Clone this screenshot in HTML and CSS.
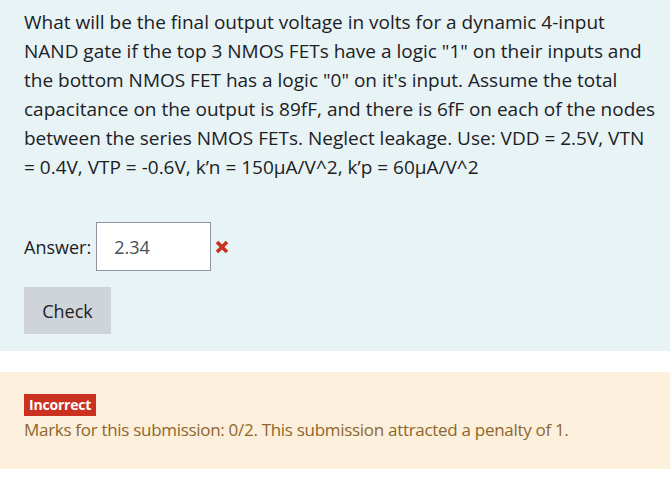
FILE: index.html
```html
<!DOCTYPE html>
<html>
<head>
<meta charset="utf-8">
<link rel="stylesheet" href="styles.css">
</head>
<body>
<div class="formulation">
  <p class="qtext">What will be the final output voltage in volts for a dynamic 4-input NAND gate if the top 3 NMOS FETs have a logic "1" on their inputs and the bottom NMOS FET has a logic "0" on it's input. Assume the total capacitance on the output is 89fF, and there is 6fF on each of the nodes between the series NMOS FETs. Neglect leakage. Use: VDD = 2.5V, VTN = 0.4V, VTP = -0.6V, k’n = 150µA/V^2, k’p = 60µA/V^2</p>
  <div class="answer">
    <label class="label">Answer:</label>
    <span class="input">2.34</span>
    <svg class="xicon" width="16" height="16" viewBox="0 0 16 16"><path d="M3 3 L13 13 M13 3 L3 13" stroke="#ca3120" stroke-width="3.6" stroke-linecap="butt"/></svg>
  </div>
  <button class="check">Check</button>
</div>
<div class="feedback">
  <span class="badge">Incorrect</span>
  <div class="marks">Marks for this submission: 0/2. This submission attracted a penalty of 1.</div>
</div>
</body>
</html>
```
FILE: styles.css
```css
html, body { margin: 0; padding: 0; background: #fff; }
body { font-family: "Open Sans", "Noto Sans", sans-serif; color: #1d2125; }
.formulation {
  background: #e7f3f5;
  padding: 8px 12px 16px 24px;
  height: 327px;
}
.qtext {
  margin: 0;
  font-size: 19px;
  line-height: 29px;
  letter-spacing: 0;
}
.answer {
  display: flex;
  align-items: center;
  margin-top: 40px;
}
.label { font-size: 18px; margin-right: 5px; }
.input {
  box-sizing: border-box;
  width: 115px;
  height: 49px;
  border: 1px solid #8f959e;
  background: #fff;
  padding-left: 17px;
  display: flex;
  align-items: center;
  font-size: 18px;
  color: #495057;
}
.xicon { margin-left: 3px; }
.check {
  display: block;
  margin-top: 16px;
  width: 87px;
  height: 47px;
  border: none;
  background: #ced4da;
  font-family: inherit;
  font-size: 18px;
  color: #1d2125;
  padding: 0;
}
.feedback {
  margin-top: 21px;
  background: #fcefdc;
  padding: 21px 24px 0 24px;
  height: 76px;
}
.badge {
  display: inline-block;
  background: #ca3120;
  color: #fff;
  font-weight: bold;
  font-size: 14px;
  line-height: 22px;
  padding: 0 5px;
  letter-spacing: -0.2px;
}
.marks {
  font-size: 17px;
  color: #8e662e;
  margin-top: 2px;
  letter-spacing: -0.3px;
}
```
